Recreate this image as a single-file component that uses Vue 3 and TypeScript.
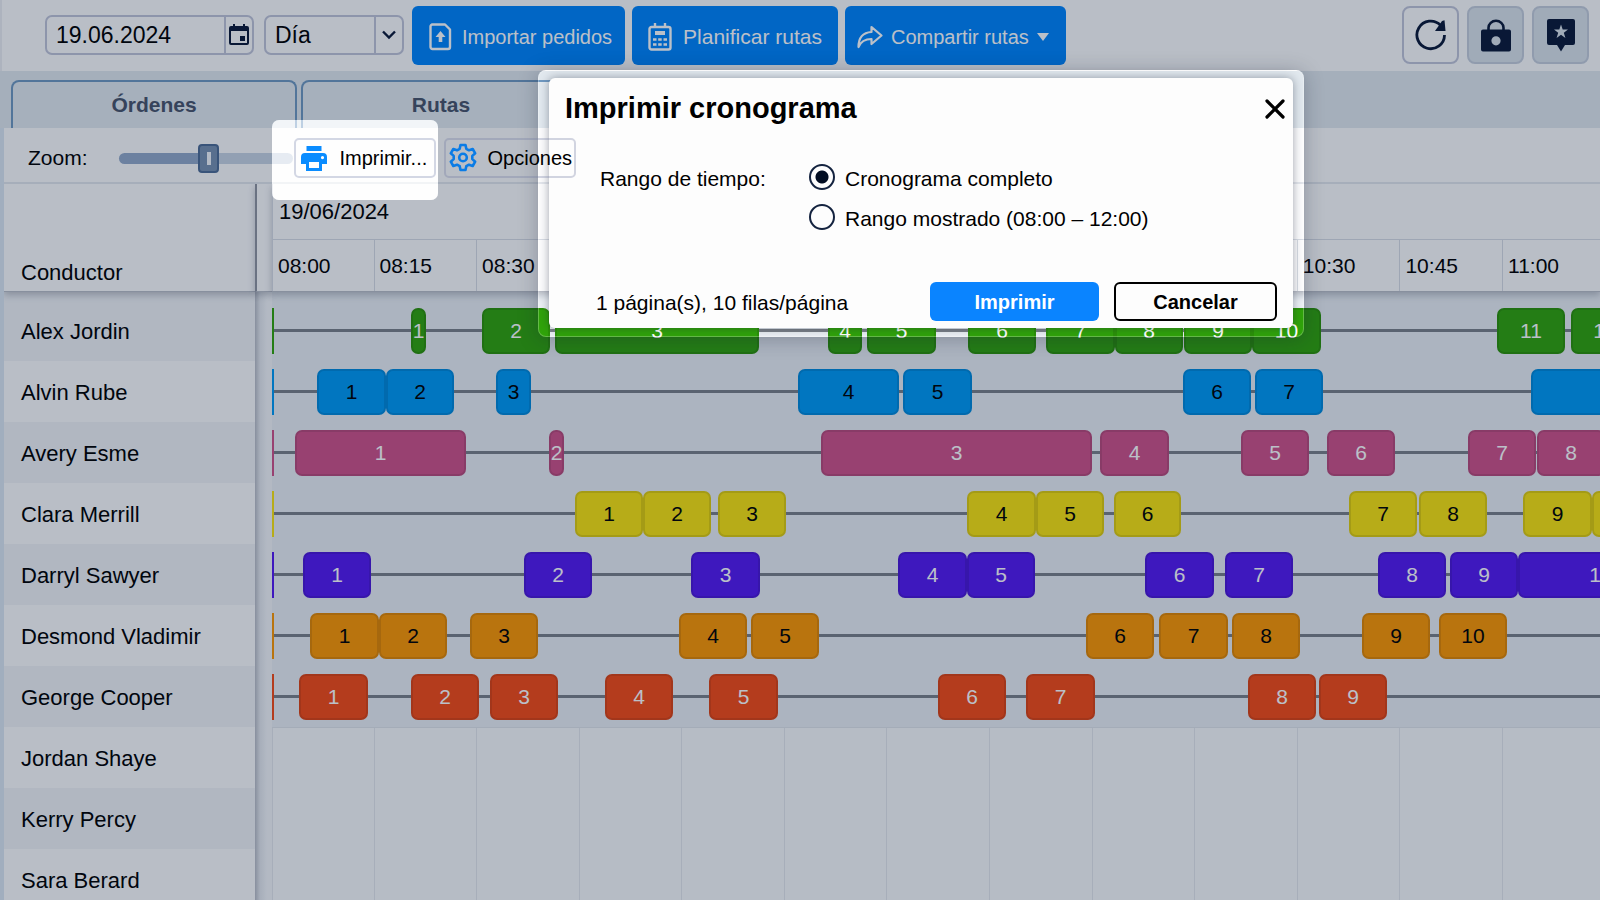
<script setup lang="ts">
import { ref } from 'vue'

interface Stop {
  start: number
  width: number
}
interface Driver {
  name: string
  tone?: string
  stops: Stop[]
}

// Horizontal span of the visible timeline, in schedule units.
const SPAN = 1328
const QUARTER = 102.6
const FIRST_QUARTER = 101.5

const pct = (value: number): string => `${(value / SPAN) * 100}%`
const cellWidth = (index: number): string => pct(index === 0 ? FIRST_QUARTER : QUARTER)

const make = (pairs: number[][]): Stop[] =>
  pairs.map(([from, to]) => ({ start: from - 272, width: to - from }))

const hours = [
  '08:00', '08:15', '08:30', '08:45', '09:00', '09:15', '09:30',
  '09:45', '10:00', '10:15', '10:30', '10:45', '11:00',
]

const drivers: Driver[] = [
  { name: 'Alex Jordin', tone: 'green', stops: make([[411, 426], [482, 550], [555, 759], [828, 862], [867, 936], [968, 1036], [1046, 1115], [1115, 1183], [1184, 1252], [1252, 1321], [1497, 1565], [1571, 1639]]) },
  { name: 'Alvin Rube', tone: 'blue', stops: make([[317, 386], [386, 454], [496, 531], [798, 899], [903, 972], [1183, 1251], [1255, 1323], [1531, 1700]]) },
  { name: 'Avery Esme', tone: 'pink', stops: make([[295, 466], [549, 564], [821, 1092], [1100, 1169], [1241, 1309], [1327, 1395], [1468, 1536], [1537, 1605]]) },
  { name: 'Clara Merrill', tone: 'yellow', stops: make([[575, 643], [643, 711], [718, 786], [967, 1036], [1036, 1104], [1114, 1181], [1349, 1417], [1419, 1487], [1523, 1592], [1592, 1661]]) },
  { name: 'Darryl Sawyer', tone: 'purple', stops: make([[303, 371], [524, 592], [691, 760], [898, 967], [967, 1035], [1145, 1214], [1225, 1293], [1378, 1446], [1450, 1518], [1518, 1684]]) },
  { name: 'Desmond Vladimir', tone: 'orange', stops: make([[310, 379], [379, 447], [470, 538], [679, 747], [751, 819], [1086, 1154], [1159, 1228], [1232, 1300], [1362, 1430], [1439, 1507]]) },
  { name: 'George Cooper', tone: 'red', stops: make([[299, 368], [411, 479], [490, 558], [605, 673], [709, 778], [938, 1006], [1026, 1095], [1248, 1316], [1319, 1387]]) },
  { name: 'Jordan Shaye', stops: [] },
  { name: 'Kerry Percy', stops: [] },
  { name: 'Sara Berard', stops: [] },
]
const routes = drivers.filter((d) => d.tone)

const date = ref('19.06.2024')
const period = ref('Día')
const zoom = ref(52)
const range = ref('full')
</script>

<template>
  <div class="app">
    <header class="topbar">
      <div class="field date">
        <input v-model="date" type="text" aria-label="Fecha" />
        <button type="button" class="field-end" aria-label="Abrir calendario">
          <svg width="22" height="24" viewBox="0 0 22 24">
            <path d="M3 3h2V1h2v2h8V1h2v2h2a2 2 0 0 1 2 2v15a2 2 0 0 1-2 2H3a2 2 0 0 1-2-2V5a2 2 0 0 1 2-2zm0 5v12h16V8z" fill="#0b1a38" fill-rule="evenodd" />
            <rect x="12" y="13" width="5" height="5" fill="#0b1a38" />
          </svg>
        </button>
      </div>
      <div class="field period">
        <select v-model="period" aria-label="Periodo">
          <option>Día</option>
        </select>
        <span class="field-end">
          <svg width="16" height="10" viewBox="0 0 16 10"><path d="M2 1.500l6 6 6-6" fill="none" stroke="#0b1a38" stroke-width="2.400" /></svg>
        </span>
      </div>
      <div class="actions">
        <button type="button" class="primary import">
          <svg width="23" height="28" viewBox="0 0 23 28">
            <path d="M3 1.500h13l5 5V24a2 2 0 0 1-2 2H3.500a2 2 0 0 1-2-2V3.500a2 2 0 0 1 2-2z" fill="none" stroke="#fff" stroke-width="2.400" stroke-linejoin="round" />
            <path d="M11.500 8l5 6h-3.200v5H9.700v-5H6.500z" fill="#fff" />
          </svg>
          Importar pedidos
        </button>
        <button type="button" class="primary plan">
          <svg width="24" height="28" viewBox="0 0 24 28">
            <rect x="1.500" y="4" width="21" height="22.500" rx="2" fill="none" stroke="#fff" stroke-width="2.400" />
            <path d="M7 0v5M17 0v5" stroke="#fff" stroke-width="2.400" />
            <rect x="7" y="8" width="10" height="4" fill="#fff" />
            <path d="M5 16.500h3.500M10.200 16.500h3.500M15.500 16.500H19M5 21.500h3.500M10.200 21.500h3.500M15.500 21.500H19" stroke="#fff" stroke-width="2.600" />
          </svg>
          Planificar rutas
        </button>
        <button type="button" class="primary share">
          <svg width="26" height="24" viewBox="0 0 26 24">
            <path d="M14.500 2l10 8.500-10 8.500v-5C8 14 4 16 1.500 22 1.500 13 6 7.500 14.500 7z" fill="none" stroke="#fff" stroke-width="2.200" stroke-linejoin="round" />
          </svg>
          Compartir rutas
          <svg class="caret" width="12" height="8" viewBox="0 0 12 8"><path d="M0 0h12L6 8z" fill="#fff" /></svg>
        </button>
      </div>
      <div class="tools">
        <button type="button" class="tool light" aria-label="Actualizar">
          <svg width="34" height="34" viewBox="0 0 34 34">
            <path d="M30.500 17A13.800 13.800 0 1 1 26.500 7.200" fill="none" stroke="#0b1a38" stroke-width="2.800" />
            <path d="M28 3l2.500-.8 1 10.800H21z" fill="#0b1a38" />
          </svg>
        </button>
        <button type="button" class="tool" aria-label="Bloquear">
          <svg width="32" height="34" viewBox="0 0 32 34">
            <path d="M8.500 13V9.800a7.500 7 0 0 1 15 0V13" fill="none" stroke="#0b1a38" stroke-width="2.600" />
            <path d="M3 11.500h26a2 2 0 0 1 2 2V31.500a2 2 0 0 1-2 2H3a2 2 0 0 1-2-2V13.500a2 2 0 0 1 2-2zm13 6.700a4.600 4.600 0 1 0 0 9.200 4.600 4.600 0 0 0 0-9.200z" fill="#0b1a38" fill-rule="evenodd" />
          </svg>
        </button>
        <button type="button" class="tool" aria-label="Novedades">
          <svg width="30" height="34" viewBox="0 0 30 34">
            <path d="M3 1h24a2 2 0 0 1 2 2v22a2 2 0 0 1-2 2h-8l-4 6.500L11 27H3a2 2 0 0 1-2-2V3a2 2 0 0 1 2-2zm12 5.500l-1.700 5H8l4.200 3.200-1.600 5.200 4.400-3.100 4.400 3.100-1.600-5.200L22 11.500h-5.300z" fill="#0b1a38" fill-rule="evenodd" />
          </svg>
        </button>
      </div>
    </header>

    <nav class="tabs">
      <button type="button" class="tab">Órdenes</button>
      <button type="button" class="tab">Rutas</button>
    </nav>

    <main class="panel">
      <div class="subbar">
        <label for="zoom">Zoom:</label>
        <input id="zoom" v-model.number="zoom" class="slider" type="range" min="0" max="100" />
        <button type="button" class="mini print">
          <svg width="26" height="25" viewBox="0 0 26 25">
            <rect x="5.500" y="0" width="15" height="5" fill="#0a8cff" />
            <path d="M4 7h18a4 4 0 0 1 4 4v7h-5v7H5v-7H0v-7a4 4 0 0 1 4-4zm4 9v6h10v-6zm13.500-6a1.600 1.600 0 1 0 0 3.200 1.600 1.600 0 0 0 0-3.200z" fill="#0a8cff" fill-rule="evenodd" />
          </svg>
          Imprimir...
        </button>
        <button type="button" class="mini options">
          <svg width="28" height="30" viewBox="0 0 28 30">
            <path d="M11.500 2h5l.8 3.800 2.700 1.500 3.700-1.300 2.500 4.300-2.900 2.600v3.200l2.900 2.600-2.500 4.300-3.700-1.300-2.700 1.500-.8 3.800h-5l-.8-3.800L8 21.700 4.300 23l-2.500-4.300 2.900-2.600v-3.200l-2.900-2.600L4.300 6 8 7.300l2.700-1.500z" fill="none" stroke="#0a7ce6" stroke-width="2.600" stroke-linejoin="round" />
            <circle cx="14" cy="14.500" r="3.800" fill="none" stroke="#0a7ce6" stroke-width="2.600" />
          </svg>
          Opciones
        </button>
      </div>

      <div class="schedule">
        <div class="heading driver-heading">Conductor</div>
        <div class="heading split-heading"></div>
        <div class="heading time-heading">
          <div class="day">19/06/2024</div>
          <div class="hours">
            <span v-for="(hour, i) in hours" :key="hour" class="hour" :style="{ width: cellWidth(i) }">{{ hour }}</span>
          </div>
        </div>

        <ul class="drivers">
          <li v-for="driver in drivers" :key="driver.name">{{ driver.name }}</li>
        </ul>
        <div class="splitter"></div>
        <div class="lanes">
          <div class="busy">
            <div v-for="route in routes" :key="route.name" class="lane" :class="route.tone">
              <div
                v-for="(stop, i) in route.stops"
                :key="i"
                class="stop"
                :style="{ left: pct(stop.start), width: pct(stop.width) }"
              >{{ i + 1 }}</div>
            </div>
          </div>
          <div class="free">
            <span v-for="(hour, i) in hours" :key="hour" class="free-cell" :style="{ width: cellWidth(i) }"></span>
          </div>
        </div>
      </div>
    </main>

    <svg class="shade" width="100%" height="100%" aria-hidden="true">
      <mask id="cutouts">
        <rect width="100%" height="100%" fill="#fff" />
        <rect x="272" y="120" width="166" height="80" rx="7" fill="#000" />
        <rect x="538" y="70" width="766" height="267" rx="8" fill="#000" />
      </mask>
      <rect width="100%" height="100%" fill="rgba(4,22,52,.27)" mask="url(#cutouts)" />
      <rect x="272" y="120" width="166" height="80" rx="7" fill="rgba(255,255,255,.55)" />
    </svg>

    <div class="halo">
      <form class="dialog" role="dialog" aria-labelledby="dialog-title" @submit.prevent>
        <div class="dialog-head">
          <h2 id="dialog-title">Imprimir cronograma</h2>
          <button type="button" class="close" aria-label="Cerrar">
            <svg width="20" height="20" viewBox="0 0 20 20"><path d="M2 2l16 16M18 2L2 18" stroke="#000" stroke-width="3.200" stroke-linecap="round" /></svg>
          </button>
        </div>
        <div class="range" role="radiogroup" aria-labelledby="range-label">
          <span id="range-label" class="range-label">Rango de tiempo:</span>
          <div class="choices">
            <label><input v-model="range" type="radio" name="range" value="full" /><span>Cronograma completo</span></label>
            <label><input v-model="range" type="radio" name="range" value="shown" /><span>Rango mostrado (08:00 – 12:00)</span></label>
          </div>
        </div>
        <div class="dialog-foot">
          <span class="pages">1 página(s), 10 filas/página</span>
          <button type="submit" class="confirm">Imprimir</button>
          <button type="button" class="cancel">Cancelar</button>
        </div>
      </form>
    </div>
  </div>
</template>

<style>
body {
  margin: 0;
}
</style>

<style scoped>
.app {
  position: relative;
  display: flex;
  flex-direction: column;
  height: 100vh;
  overflow: hidden;
  background: #dce7f1;
  color: #000;
  font-family: "Liberation Sans", Arial, sans-serif;
  font-size: 21px;
}
.app *,
.app *::before {
  box-sizing: border-box;
}
button,
input,
select {
  font: inherit;
  color: inherit;
}
button {
  padding: 0;
  border: 0;
  background: none;
}
svg {
  display: block;
  flex: none;
}

.topbar {
  display: flex;
  align-items: flex-start;
  height: 71px;
  padding: 6px 11px 0 43px;
  border-left: 2px solid #eceef2;
  background: #fcfcfd;
}
.field {
  display: flex;
  height: 40px;
  margin-top: 9px;
  border: 2px solid #c0c4d8;
  border-radius: 7px;
  font-size: 23px;
}
.field input,
.field select {
  flex: 1;
  min-width: 0;
  padding: 0 0 0 9px;
  border: 0;
  background: none;
  appearance: none;
  outline: 0;
}
.field-end {
  display: flex;
  align-items: center;
  justify-content: center;
  width: 28px;
  border-left: 2px solid #c0c4d8;
}
.date {
  width: 209px;
}
.period {
  width: 140px;
  margin-left: 10px;
}
.actions {
  display: flex;
  gap: 7px;
  margin-left: 8px;
}
.primary {
  display: flex;
  align-items: center;
  height: 59px;
  border-radius: 6px;
  background: #0084fb;
  color: #fff;
  font-size: 20px;
  white-space: nowrap;
}
.import {
  gap: 10px;
  padding: 3px 13px 0 17px;
}
.plan {
  gap: 11px;
  padding: 3px 16px 0 16px;
  font-size: 21px;
}
.share {
  gap: 8px;
  padding: 3px 17px 0 12px;
}
.tools {
  display: flex;
  gap: 8px;
  margin-left: auto;
}
.tool {
  display: flex;
  align-items: center;
  justify-content: center;
  width: 57px;
  height: 58px;
  border: 2px solid #c4cddb;
  border-radius: 8px;
  background: #dbe2ea;
}
.tool.light {
  border-color: #c0c4d8;
  background: none;
}

.tabs {
  display: flex;
  gap: 4px;
  height: 57px;
  padding: 9px 11px 0;
  background: #e1e8ee;
}
.tab {
  width: 286px;
  border: 2px solid #6f98c0;
  border-bottom: 0;
  border-radius: 8px 8px 0 0;
  background: #e2e9ef;
  color: #49546a;
  font-weight: 700;
}
.tab + .tab {
  width: 280px;
}

.panel {
  display: flex;
  flex: 1;
  flex-direction: column;
  min-height: 0;
  margin-left: 4px;
  background: #fcfcfd;
}
.subbar {
  display: flex;
  flex: none;
  align-items: center;
  height: 56px;
  padding: 6px 0 0 24px;
  border-bottom: 2px solid #e3e6ec;
}
.slider {
  width: 174px;
  height: 30px;
  margin: 0 1px 0 31px;
  background: none;
  appearance: none;
}
.slider::-webkit-slider-runnable-track {
  height: 11px;
  border-radius: 6px;
  background: linear-gradient(to right, #93a9c8 52%, #c7d3e2 52%);
}
.slider::-webkit-slider-thumb {
  width: 21px;
  height: 29px;
  margin-top: -9px;
  border: 2px solid #4e6c94;
  border-radius: 4px;
  background: linear-gradient(#f4f7fb, #f4f7fb) center / 4px 13px no-repeat, #7890b0;
  appearance: none;
}
.mini {
  display: flex;
  align-items: center;
  height: 40px;
  border: 2px solid #d3d7e4;
  border-radius: 5px;
  font-size: 20px;
  white-space: nowrap;
}
.print {
  position: relative;
  z-index: 2;
  gap: 13px;
  width: 142px;
  padding-left: 5px;
}
.options {
  position: relative;
  z-index: 3;
  gap: 11px;
  width: 132px;
  margin-left: 8px;
  padding-left: 3px;
  border-color: rgba(110, 120, 160, .3);
}

.schedule {
  display: grid;
  flex: 1;
  grid-template-rows: 108px 1fr;
  grid-template-columns: 251px 17px 1fr;
  min-height: 0;
  overflow: hidden;
}
.heading {
  z-index: 0;
  border-bottom: 1px solid #b9bdc6;
  background: #fcfcfd;
  box-shadow: 0 3px 7px rgba(40, 48, 65, .28);
}
.driver-heading {
  display: flex;
  align-items: flex-end;
  padding: 0 17px 5px;
  font-size: 22px;
}
.split-heading {
  border-left: 2px solid #9095a0;
}
.time-heading {
  min-width: 0;
}
.day {
  height: 56px;
  padding: 15px 0 0 6px;
  border-bottom: 1px solid #d8dce4;
  border-left: 1px solid #d8dce4;
  font-size: 22px;
  line-height: 26px;
}
.hours {
  display: flex;
  height: 51px;
  overflow: hidden;
}
.hour {
  flex: none;
  padding: 13px 0 0 5px;
  border-left: 1px solid #d8dce4;
  line-height: 26px;
}

.drivers {
  margin: 0;
  padding: 8px 0 0;
  background: #f1f3f6;
  font-size: 22px;
  list-style: none;
}
.drivers li {
  display: flex;
  align-items: center;
  height: 61px;
  padding: 3px 0 0 17px;
  background: #fcfcfd;
  white-space: nowrap;
}
.drivers li:nth-child(odd) {
  background: #f1f3f6;
}
.splitter {
  background: linear-gradient(to right, #b9bdc6, #e4e7ec 5px, #f4f6f9 12px);
}
.lanes {
  display: flex;
  flex-direction: column;
  min-width: 0;
  overflow: hidden;
}
.busy {
  padding-top: 8px;
  background: #ebeff4;
}
.lane {
  position: relative;
  display: flex;
  align-items: center;
  height: 61px;
}
.lane::before {
  content: "";
  width: 100%;
  height: 46px;
  border-left: 2px solid var(--tone);
  background: linear-gradient(#7b8088, #7b8088) center / 100% 3px no-repeat;
}
.stop {
  position: absolute;
  top: 8px;
  display: flex;
  align-items: center;
  justify-content: center;
  height: 46px;
  border: 2px solid rgba(0, 0, 0, .1);
  border-radius: 7px;
  background: var(--tone);
  color: var(--ink);
}
.green {
  --tone: #30a30a;
  --ink: #fff;
}
.blue {
  --tone: #009af5;
  --ink: #000;
}
.pink {
  --tone: #d05288;
  --ink: #fff;
}
.yellow {
  --tone: #fae40e;
  --ink: #000;
}
.purple {
  --tone: #5419f1;
  --ink: #fff;
}
.orange {
  --tone: #fd9700;
  --ink: #000;
}
.red {
  --tone: #f64a15;
  --ink: #fff;
}
.free {
  display: flex;
  flex: 1;
  border-top: 1px solid #e0e4ea;
  background: #f9fafb;
}
.free-cell {
  flex: none;
  border-left: 1px solid #e4e7ec;
}

.shade {
  position: absolute;
  inset: 0;
  z-index: 1;
  pointer-events: none;
}
.halo {
  position: absolute;
  top: 70px;
  left: 538px;
  z-index: 2;
  width: 766px;
  padding: 8px 11px 9px;
  border-radius: 8px;
  box-shadow: 0 2px 20px rgba(20, 30, 50, .28), inset 0 0 0 1px rgba(255, 255, 255, .25);
}
.dialog {
  display: flex;
  flex-direction: column;
  min-height: 250px;
  padding: 14px 16px 7px;
  border-radius: 6px;
  background: #fdfdfd;
  box-shadow: 0 0 10px rgba(20, 30, 50, .4);
}
.dialog-head {
  display: flex;
  align-items: center;
  justify-content: space-between;
}
h2 {
  margin: 0;
  font-size: 29px;
  line-height: 32px;
}
.close {
  padding: 2px 8px 0;
  margin-right: -16px;
}
.range {
  display: flex;
  align-items: flex-start;
  margin: 40px 0 0 35px;
  line-height: 26px;
}
.range-label {
  width: 209px;
  padding-top: 2px;
}
.choices {
  display: flex;
  flex-direction: column;
  gap: 12px;
}
.choices label {
  display: flex;
  align-items: flex-start;
  gap: 10px;
}
.choices label span {
  padding-top: 2px;
}
.choices input {
  width: 26px;
  height: 26px;
  margin: 0;
  border: 2px solid #14233f;
  border-radius: 50%;
  appearance: none;
}
.choices input:checked {
  background: radial-gradient(circle, #020d22 6px, transparent 7px);
}
.dialog-foot {
  display: flex;
  align-items: center;
  margin-top: auto;
}
.pages {
  margin: 3px auto 0 31px;
}
.confirm,
.cancel {
  height: 39px;
  padding-top: 1px;
  border-radius: 6px;
  font-size: 20px;
  font-weight: 700;
}
.confirm {
  width: 169px;
  background: #0a84ff;
  color: #fff;
}
.cancel {
  width: 163px;
  margin-left: 15px;
  border: 2px solid #000;
}
</style>
